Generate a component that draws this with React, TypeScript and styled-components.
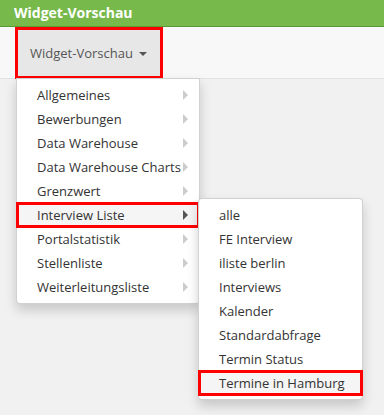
import styled, { createGlobalStyle } from "styled-components";

const GlobalStyle = createGlobalStyle`
  html, body {
    margin: 0;
    padding: 0;
    background: #f1f1f1;
    font-family: "Open Sans", "Liberation Sans", sans-serif;
  }
`;

const Page = styled.div`
  width: 384px;
  height: 415px;
  overflow: hidden;
  background: #f1f1f1;
`;

const Header = styled.div`
  height: 26px;
  line-height: 26px;
  padding: 0 14px;
  background: #77b94b;
  border-bottom: 1px solid #5a9a35;
  color: #fff;
  font-size: 14px;
  font-weight: 700;
`;

const Navbar = styled.div`
  display: flex;
  height: 51px;
  padding: 0 15px;
  background: #f8f8f8;
  border-bottom: 1px solid #e3e3e3;
`;

const DropdownWrap = styled.div`
  position: relative;
`;

const Toggle = styled.div`
  box-sizing: border-box;
  display: flex;
  align-items: center;
  width: 148px;
  height: 52px;
  padding: 0 12px;
  background: #e7e7e7;
  border: 3px solid #ff0000;
  color: #555;
  font-size: 13px;
`;

const Caret = styled.span`
  display: inline-block;
  margin-left: 6px;
  margin-top: 2px;
  border-top: 4px solid #555;
  border-left: 4px solid transparent;
  border-right: 4px solid transparent;
`;

const Menu = styled.ul<{ $sub?: boolean }>`
  position: absolute;
  list-style: none;
  margin: 0;
  padding: 4px 0;
  background: #fff;
  border: 1px solid rgba(0, 0, 0, 0.18);
  box-shadow: 0 6px 12px rgba(0, 0, 0, 0.175);
  font-size: 13px;
  color: #333;
  ${({ $sub }) =>
    $sub
      ? `
    top: -5px;
    left: calc(100% - 1px);
    width: 163px;
    border-radius: 4px;
  `
      : `
    top: 100%;
    left: 1px;
    width: 182px;
    border-radius: 0 0 4px 4px;
  `}
`;

const Item = styled.li<{ $active?: boolean; $marked?: boolean }>`
  position: relative;
  display: flex;
  align-items: center;
  justify-content: space-between;
  height: 24px;
  padding: 0 11px 0 20px;
  white-space: nowrap;
  background: ${({ $active }) => ($active ? "#f5f5f5" : "transparent")};
  outline: ${({ $marked }) => ($marked ? "3px solid #ff0000" : "none")};
  outline-offset: -2px;
`;

const Arrow = styled.span<{ $dark?: boolean }>`
  flex: none;
  border-left: 5px solid ${({ $dark }) => ($dark ? "#555" : "#ccc")};
  border-top: 5px solid transparent;
  border-bottom: 5px solid transparent;
`;

const mainItems = [
  "Allgemeines",
  "Bewerbungen",
  "Data Warehouse",
  "Data Warehouse Charts",
  "Grenzwert",
  "Interview Liste",
  "Portalstatistik",
  "Stellenliste",
  "Weiterleitungsliste",
];

const subItems = [
  "alle",
  "FE Interview",
  "iliste berlin",
  "Interviews",
  "Kalender",
  "Standardabfrage",
  "Termin Status",
  "Termine in Hamburg",
];

const OPEN = "Interview Liste";
const PICKED = "Termine in Hamburg";

export default function App() {
  return (
    <Page>
      <GlobalStyle />
      <Header>Widget-Vorschau</Header>
      <Navbar>
        <DropdownWrap>
          <Toggle>
            Widget-Vorschau
            <Caret />
          </Toggle>
          <Menu>
            {mainItems.map((name) => {
              const open = name === OPEN;
              return (
                <Item key={name} $active={open} $marked={open}>
                  <span>{name}</span>
                  <Arrow $dark={open} />
                  {open && (
                    <Menu $sub>
                      {subItems.map((sub) => (
                        <Item key={sub} $active={sub === PICKED} $marked={sub === PICKED}>
                          <span>{sub}</span>
                        </Item>
                      ))}
                    </Menu>
                  )}
                </Item>
              );
            })}
          </Menu>
        </DropdownWrap>
      </Navbar>
    </Page>
  );
}
